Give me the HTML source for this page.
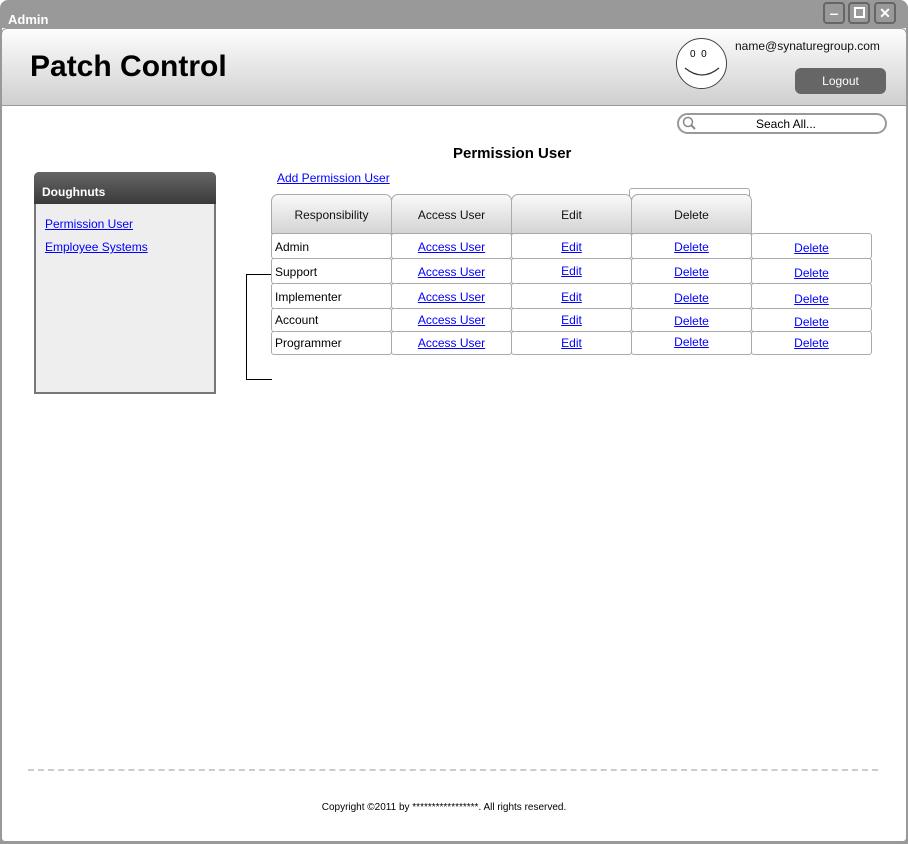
<!DOCTYPE html>
<html><head><style>
*{margin:0;padding:0;box-sizing:border-box}
body{width:908px;height:844px;background:#fff;font-family:"Liberation Sans",Arial,sans-serif;position:relative;overflow:hidden;font-size:12px}
.a{position:absolute}
a{color:#00f;text-decoration:underline}
.wb{position:absolute;top:2px;width:22px;height:22px;border:2px solid #666;border-radius:4px;background:#999;color:#fff;font-weight:bold;text-align:center;line-height:18px;font-size:14px}
.th{position:absolute;top:194px;height:40px;width:121px;border:1px solid #aaa;border-radius:7px 7px 0 0;background:linear-gradient(#fafafa,#d4d4d4);text-align:center;line-height:40px;font-size:12px;color:#111}
.c{position:absolute;width:121px;border:1px solid #aaa;border-radius:3px;background:#fff;text-align:center;font-size:12px}
</style></head><body>
<div class="a" style="left:0;top:0;width:908px;height:844px;background:#999;border-radius:8px 8px 0 0"></div>
<div class="a" style="left:1px;top:28px;width:906px;height:814px;background:#fff;border:1px solid #999;border-top:none;border-radius:0 0 4px 4px"></div>
<div class="a" style="left:8px;top:12px;color:#fff;font-weight:bold;font-size:13px">Admin</div>
<div class="wb" style="left:823px">‒</div>
<div class="wb" style="left:848px"><span style="display:inline-block;width:11px;height:11px;border:2px solid #fff;margin-top:3px"></span></div>
<div class="wb" style="left:874px">✕</div>
<div class="a" style="left:1px;top:28px;width:906px;height:78px;background:linear-gradient(#fdfdfd,#cfcfcf);border:1px solid #999;border-radius:6px 6px 0 0"></div>
<div class="a" style="left:30px;top:50px;font-size:30px;font-weight:bold;color:#000">Patch Control</div>
<div class="a" style="left:676px;top:38px;width:51px;height:51px;border:1px solid #444;border-radius:50%;background:#fff">
<div class="a" style="left:13px;top:10px;font-size:10px">0&nbsp;&nbsp;0</div>
<svg class="a" style="left:0;top:0" width="51" height="51"><path d="M8 29 Q25 43 42 29" fill="none" stroke="#333" stroke-width="1.3"/></svg></div>
<div class="a" style="left:735px;top:39px;font-size:12px;color:#111">name@synaturegroup.com</div>
<div class="a" style="left:795px;top:68px;width:91px;height:26px;background:#666;border-radius:6px;color:#fff;text-align:center;line-height:27px;font-size:12px">Logout</div>
<div class="a" style="left:677px;top:113px;width:210px;height:21px;border:2px solid #999;border-radius:11px;background:#fff;text-align:center;line-height:19px;font-size:12px;padding-left:8px">Seach All...</div>
<svg class="a" style="left:682px;top:116px" width="16" height="16"><circle cx="6" cy="6" r="4.5" fill="none" stroke="#888" stroke-width="1.5"/><path d="M9 9 L13 13" stroke="#888" stroke-width="2"/></svg>
<div class="a" style="left:453px;top:145px;font-size:15px;font-weight:bold">Permission User</div>
<div class="a" style="left:34px;top:172px;width:182px;height:222px;background:#eee;border:2px solid #777;border-radius:5px 5px 0 0"></div>
<div class="a" style="left:34px;top:172px;width:182px;height:32px;background:linear-gradient(#666,#3a3a3a);border-radius:5px 5px 0 0;color:#fff;font-weight:bold;line-height:40px;padding-left:8px;font-size:12px">Doughnuts</div>
<a class="a" style="left:45px;top:217px">Permission User</a>
<a class="a" style="left:45px;top:240px">Employee Systems</a>
<a class="a" style="left:277px;top:171px">Add Permission User</a>
<div class="a" style="left:629px;top:188px;width:121px;height:10px;border:1px solid #aaa;border-bottom:none;border-radius:3px 3px 0 0"></div>
<div class="th" style="left:271px">Responsibility</div>
<div class="th" style="left:391px">Access User</div>
<div class="th" style="left:511px">Edit</div>
<div class="th" style="left:631px">Delete</div>
<div class="a" style="left:246px;top:274px;width:26px;height:106px;border:1px solid #000;border-right:none"></div>
<div class="a" style="left:271px;top:233px">
<div class="c" style="left:0;top:0;height:26px;line-height:27px;text-align:left;padding-left:3px">Admin</div>
<div class="c" style="left:120px;top:0;height:26px;line-height:27px"><a>Access User</a></div>
<div class="c" style="left:240px;top:0;height:26px;line-height:27px"><a>Edit</a></div>
<div class="c" style="left:360px;top:0;height:26px;line-height:27px"><a>Delete</a></div>
<div class="c" style="left:480px;top:0;height:26px;line-height:29px"><a>Delete</a></div>
<div class="c" style="left:0;top:25px;height:26px;line-height:27px;text-align:left;padding-left:3px">Support</div>
<div class="c" style="left:120px;top:25px;height:26px;line-height:27px"><a>Access User</a></div>
<div class="c" style="left:240px;top:25px;height:26px;line-height:25px"><a>Edit</a></div>
<div class="c" style="left:360px;top:25px;height:26px;line-height:27px"><a>Delete</a></div>
<div class="c" style="left:480px;top:25px;height:26px;line-height:29px"><a>Delete</a></div>
<div class="c" style="left:0;top:50px;height:26px;line-height:27px;text-align:left;padding-left:3px">Implementer</div>
<div class="c" style="left:120px;top:50px;height:26px;line-height:27px"><a>Access User</a></div>
<div class="c" style="left:240px;top:50px;height:26px;line-height:27px"><a>Edit</a></div>
<div class="c" style="left:360px;top:50px;height:26px;line-height:29px"><a>Delete</a></div>
<div class="c" style="left:480px;top:50px;height:26px;line-height:31px"><a>Delete</a></div>
<div class="c" style="left:0;top:75px;height:24px;line-height:22px;text-align:left;padding-left:3px">Account</div>
<div class="c" style="left:120px;top:75px;height:24px;line-height:22px"><a>Access User</a></div>
<div class="c" style="left:240px;top:75px;height:24px;line-height:22px"><a>Edit</a></div>
<div class="c" style="left:360px;top:75px;height:24px;line-height:24px"><a>Delete</a></div>
<div class="c" style="left:480px;top:75px;height:24px;line-height:26px"><a>Delete</a></div>
<div class="c" style="left:0;top:98px;height:24px;line-height:22px;text-align:left;padding-left:3px">Programmer</div>
<div class="c" style="left:120px;top:98px;height:24px;line-height:22px"><a>Access User</a></div>
<div class="c" style="left:240px;top:98px;height:24px;line-height:22px"><a>Edit</a></div>
<div class="c" style="left:360px;top:98px;height:24px;line-height:20px"><a>Delete</a></div>
<div class="c" style="left:480px;top:98px;height:24px;line-height:22px"><a>Delete</a></div>
</div>
<div class="a" style="left:28px;top:769px;width:850px;border-top:2px dashed #ccc"></div>
<div class="a" style="left:-10px;top:802px;width:908px;text-align:center;font-size:10px;color:#000">Copyright ©2011 by *****************. All rights reserved.</div>
</body></html>
